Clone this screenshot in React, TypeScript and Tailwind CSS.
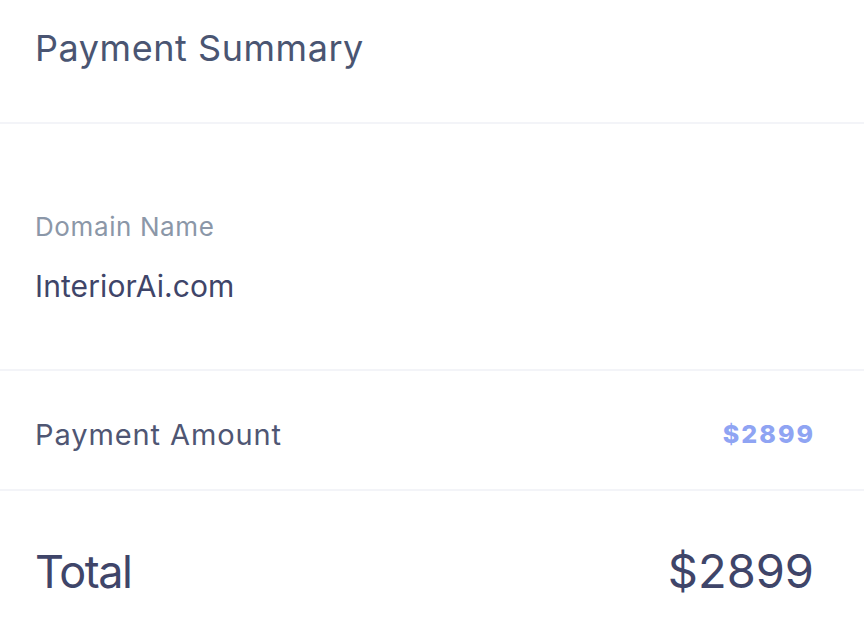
export default function App() {
  return (
    <div className="w-[864px] h-[638px] bg-white overflow-hidden" style={{ fontFamily: "Inter, 'Noto Sans', sans-serif" }}>
      <div className="h-[124px] px-[35px] pt-[22px] border-b-2 border-[#f3f4f8]">
        <h1 className="text-[36px] leading-[52px] tracking-[0.55px] text-[#4a5572] font-normal">Payment Summary</h1>
      </div>
      <div className="h-[247px] px-[35px] pt-[83px] border-b-2 border-[#f3f4f8]">
        <div className="text-[26px] leading-[40px] tracking-[0.6px] text-[#8b97a8]">Domain Name</div>
        <div className="mt-[19px] text-[30px] leading-[40px] tracking-[0.1px] text-[#3f4569]">InteriorAi.com</div>
      </div>
      <div className="h-[120px] px-[35px] pt-[10px] flex items-center justify-between border-b-2 border-[#f3f4f8]">
        <span className="text-[29px] tracking-[0.9px] text-[#4f5673]">Payment Amount</span>
        <span className="text-[25px] font-extrabold tracking-[2px] text-[#8fa4f3] mr-[14px]">$2899</span>
      </div>
      <div className="h-[147px] px-[35px] pt-[14px] flex items-center justify-between">
        <span className="text-[45px] tracking-[-1.4px] text-[#3f4569]">Total</span>
        <span className="text-[47px] text-[#3f4569] mr-[15px]">$2899</span>
      </div>
    </div>
  );
}
